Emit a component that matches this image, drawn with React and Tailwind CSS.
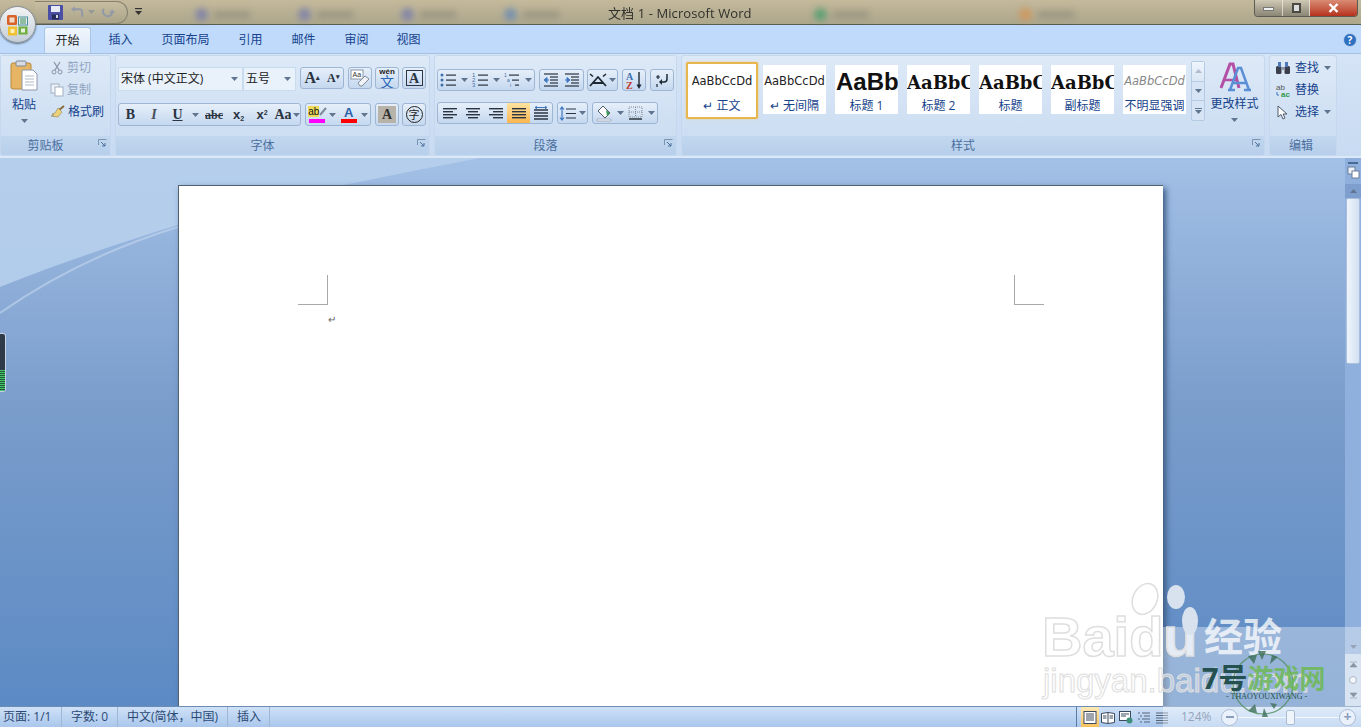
import React from 'react';

const font = { fontFamily: '"Open Sans","Noto Sans CJK SC",sans-serif' };

const Caret = ({ className = '' }) => (
  <svg width="7" height="4" viewBox="0 0 7 4" className={`shrink-0 ${className}`}><path d="M0 0h7L3.5 4z" fill="#5f7590" /></svg>
);

const Launcher = () => (
  <svg width="9" height="9" viewBox="0 0 9 9" className="shrink-0">
    <path d="M.5 6V.5H8.500" fill="none" stroke="#7d93ae" />
    <path d="M3 3l4 4M7 4v3H4" fill="none" stroke="#4d6f9c" />
  </svg>
);

const Group = ({ width, label, launcher, children }) => (
  <div className={`${width} h-[101px] shrink-0 flex flex-col rounded-[3px] border border-[#c5d8ee] bg-gradient-to-b from-[#dde9f7] to-[#c8dbf1] overflow-hidden`}>
    <div className="flex-1 min-h-0">{children}</div>
    <div className={`h-[19px] relative flex items-center justify-center bg-gradient-to-b from-[#c2d7ef] to-[#b7cfeb] text-[12px] text-[#4b6f9f] ${launcher ? 'pr-[20px]' : 'pr-[4px]'}`}>
      {label}
      {launcher && <span className="absolute right-[3px] top-[3px] flex"><Launcher /></span>}
    </div>
  </div>
);

const Seg = ({ width, height = 'h-[23px]', children }) => (
  <div className={`${width} ${height} shrink-0 flex items-center justify-around rounded-[3px] border border-[#9db6d3] bg-gradient-to-b from-[#e6effa] to-[#c5d8ef] overflow-hidden`}>{children}</div>
);

const Slot = ({ width, children }) => (
  <span className={`${width} shrink-0 flex items-center justify-center`}>{children}</span>
);

const Lines = ({ rows = 4, w = 14, align = 'left' }) => {
  const widths = rows === 4 ? [14, 10, 14, 10] : [14, 14, 14, 14];
  return (
    <svg width={w} height="13" viewBox="0 0 14 13">
      {widths.map((l, i) => {
        const x = align === 'left' ? 0 : align === 'right' ? 14 - l : (14 - l) / 2;
        return <rect key={i} x={x} y={1 + i * 3} width={l} height="1.4" fill="#2b3440" />;
      })}
    </svg>
  );
};

const ListIcon = ({ kind }) => (
  <svg width="17" height="15" viewBox="0 0 17 15">
    {[2, 7, 12].map((y, i) => (
      <g key={y}>
        {kind === 'bullet' && <circle cx="2" cy={y} r="1.5" fill="#3f6fa8" />}
        {kind === 'number' && <text x="0" y={y + 2} fontSize="6" fill="#3f6fa8" fontFamily="Liberation Sans">{i + 1}</text>}
        {kind === 'multi' && <text x={i * 3} y={y + 2} fontSize="5" fill="#3f6fa8" fontFamily="Liberation Sans">{['1', 'a', 'i'][i]}</text>}
        <rect x={kind === 'multi' ? 5 + i * 3 : 6} y={y - 0.5} width={kind === 'multi' ? 10 - i * 3 : 10} height="1.2" fill="#2b3440" />
      </g>
    ))}
  </svg>
);

const Indent = ({ flip }) => (
  <svg width="16" height="14" viewBox="0 0 16 14">
    {[1, 4, 7, 10, 13].map(y => <rect key={y} x={y === 1 || y === 13 ? 1 : 7} y={y - 0.6} width={y === 1 || y === 13 ? 14 : 8} height="1.2" fill="#2b3440" />)}
    <path d={flip ? 'M1 7h3.5M3 4.5L6 7 3 9.5z' : 'M6 7H2.5M4 4.5L1 7l3 2.5z'} fill="#3f78c0" stroke="#3f78c0" />
  </svg>
);

const Style = ({ selected, preview, label, previewClass }) => (
  <div className={selected
    ? 'w-[72px] h-[57px] shrink-0 mr-[-4px] border-2 border-[#e8b64f] rounded-[2px] bg-white flex flex-col items-center shadow-[0_0_2px_#f5c870]'
    : 'w-[63px] h-[49px] mt-[3px] shrink-0 bg-white flex flex-col items-center overflow-hidden'}>
    <div className={`h-[33px] w-full flex items-center justify-center overflow-hidden whitespace-nowrap ${selected ? 'pt-[2px]' : 'pt-[1px]'} ${previewClass}`}>{preview}</div>
    <div className={`text-[12px] leading-[16px] text-[#15428b] whitespace-nowrap ${selected ? 'mt-[1px]' : ''}`}>{label}</div>
  </div>
);

const EditRow = ({ icon, label, caret }) => (
  <div className="h-[22px] flex items-center gap-[3px] text-[12px] text-[#15428b]">
    <span className="w-[19px] flex justify-center">{icon}</span>
    {label}
    {caret && <Caret className="ml-[2px]" />}
  </div>
);

const Blob = ({ color, width }) => (
  <div className="flex items-center gap-[6px] shrink-0" style={{ width }}>
    <div className="w-[13px] h-[13px] rounded-full blur-[3px]" style={{ background: color }} />
    <div className="w-[36px] h-[7px] bg-[#6f6e66] opacity-50 blur-[3px]" />
  </div>
);

const ViewIcon = ({ kind }) => (
  <svg width="14" height="13" viewBox="0 0 14 13">
    {kind === 'print' && <><rect x="1" y=".5" width="12" height="12" fill="#fff" stroke="#3d4a5c" /><path d="M3 3h8M3 5h8M3 7h8M3 9h8" stroke="#3d4a5c" /></>}
    {kind === 'read' && <><path d="M.5 2.500L7 1.500l6.500 1v9L7 12.500l-6.500-1zM7 1.500v11" fill="#fff" stroke="#3d4a5c" /><path d="M2 5h3.500M2 7h3.500M8.500 5H12M8.500 7H12" stroke="#3d4a5c" /></>}
    {kind === 'web' && <><rect x=".5" y=".5" width="11" height="9" fill="#fff" stroke="#3d4a5c" /><path d="M2 3h8M2 5h5" stroke="#3d4a5c" /><circle cx="10.500" cy="9.500" r="3" fill="#3f8f7a" /></>}
    {kind === 'outline' && <path d="M1 2h2M5 2h8M3 5h2M7 5h6M1 8h2M5 8h8M3 11h2M7 11h6" stroke="#55657a" strokeWidth="1.200" />}
    {kind === 'draft' && <path d="M1 2h12M1 4.500h12M1 7h12M1 9.500h12M1 12h12" stroke="#55657a" strokeWidth="1.200" />}
  </svg>
);

export default function App() {
  return (
    <div style={font} className="relative w-[1361px] h-[727px] overflow-hidden flex flex-col bg-[#7fa3d0]">
      {/* title bar */}
      <div className="h-[25px] shrink-0 relative flex items-center border-b border-[#5c5b4f] bg-gradient-to-b from-[#c4b99b] to-[#aca68c]">
        <div className="absolute left-[195px] top-[8px] flex opacity-70">
          <Blob color="#6f76b0" width="103px" />
          <Blob color="#6f76b0" width="103px" />
          <Blob color="#6f76b0" width="103px" />
          <Blob color="#5f86b8" width="310px" />
          <Blob color="#3a9a68" width="205px" />
          <Blob color="#d9904d" width="160px" />
        </div>
        <div className="ml-[35px] relative w-[93px] h-[23px] rounded-r-[14px] border border-l-0 border-[#85826f] bg-gradient-to-b from-[#c9c0a5]/70 to-[#aaa388]/70 flex items-center pl-[13px]">
          <svg width="15" height="15" viewBox="0 0 15 15"><rect width="15" height="15" rx="1" fill="#4a4fa6" /><rect x="3" y="1" width="9" height="6" fill="#e8ebf5" /><rect x="4" y="9.500" width="7" height="5" fill="#272a55" /><rect x="8" y="10" width="2" height="3" fill="#d5d8e8" /></svg>
          <svg width="14" height="13" viewBox="0 0 15 13" className="ml-[7px] opacity-90"><path d="M13 11V6a3 3 0 0 0-3-3H3" fill="none" stroke="#8f97a8" strokeWidth="2.200" /><path d="M5 0L1 3l4 3z" fill="#8f97a8" /></svg>
          <Caret className="ml-[4px] opacity-40" />
          <svg width="14" height="13" viewBox="0 0 15 13" className="ml-[6px] opacity-90"><path d="M3 2.500A5 5 0 1 0 12 6" fill="none" stroke="#8f97a8" strokeWidth="2.200" /><path d="M9 7l3-4 3 4z" fill="#8f97a8" /></svg>
        </div>
        <svg width="7" height="8" viewBox="0 0 7 8" className="ml-[7px]"><rect width="7" height="1.200" fill="#333" /><path d="M0 3h7L3.500 7z" fill="#333" /></svg>
        <div className="absolute left-[608px] top-[5px] text-[13px] leading-[16px] tracking-[0.1px] text-[#30302c] whitespace-nowrap">文档 1 - Microsoft Word</div>
        <div className="ml-auto mr-[3px] mb-[8px] h-[17px] flex rounded-b-[4px] border border-t-0 border-[#5d5c54] overflow-hidden">
          <div className="w-[28px] flex items-center justify-center bg-gradient-to-b from-[#cfc9b5] to-[#8a8675] border-r border-[#f0ede2]/70"><div className="w-[11px] h-[4px] mt-[3px] bg-[#eee] border border-[#777]" /></div>
          <div className="w-[27px] flex items-center justify-center bg-gradient-to-b from-[#cfc9b5] to-[#8a8675] border-r border-[#f0ede2]/70"><div className="w-[9px] h-[10px] border-2 border-[#4a4a44] bg-[#ddd]" /></div>
          <div className="w-[47px] flex items-center justify-center bg-gradient-to-b from-[#d98b74] to-[#b5301c]">
            <svg width="11" height="10" viewBox="0 0 11 10"><path d="M1.500 1l8 8M9.500 1l-8 8" stroke="#fff" strokeWidth="2.400" /></svg>
          </div>
        </div>
      </div>

      {/* office button */}
      <div className="absolute left-[-1px] top-[6px] w-[37px] h-[37px] rounded-full border border-[#8a9099] bg-gradient-to-b from-[#f2f3f3] to-[#c4ced8] shadow-[0_1px_2px_#5a6b7f] flex items-center justify-center z-10">
        <svg width="24" height="24" viewBox="0 0 24 24">
          <rect x="1" y="2" width="10" height="10" rx="1.500" fill="#d9622b" />
          <rect x="3.500" y="4.500" width="5" height="5" fill="#f3d9c8" />
          <rect x="12.500" y="4" width="9" height="8" fill="#e3edf0" stroke="#4b8f9c" />
          <path d="M14 6h6M14 8h6M14 10h6" stroke="#3c8a57" strokeWidth="1" />
          <rect x="2" y="13.500" width="9" height="9" fill="#f0c033" />
          <rect x="4.500" y="16" width="4" height="4" fill="#fbeeb6" />
          <rect x="12.500" y="13.500" width="9" height="8" fill="#6fae3f" />
          <rect x="15" y="15.500" width="4" height="4" fill="#e5f1d8" />
        </svg>
      </div>

      {/* tabs */}
      <div className="h-[28px] shrink-0 flex items-end pl-[44px] bg-[#bfdafb] text-[12px] text-[#15428b]">
        <div className="w-[47px] h-[26px] flex items-center justify-center rounded-t-[3px] border border-b-0 border-[#a9c4e4] bg-gradient-to-b from-[#f0f6fd] to-[#dce9f8] text-[#222]">开始</div>
        <div className="h-[26px] flex items-center">
          <span className="w-[59px] text-center">插入</span>
          <span className="w-[71px] text-center">页面布局</span>
          <span className="w-[59px] text-center">引用</span>
          <span className="w-[47px] text-center">邮件</span>
          <span className="w-[59px] text-center">审阅</span>
          <span className="w-[45px] text-center">视图</span>
        </div>
        <div className="ml-auto mr-[4px] mb-[6px] w-[14px] h-[14px] rounded-full bg-[#2f6fc0] border border-[#bcd4ee] text-white text-[10px] leading-[12px] font-bold text-center">?</div>
      </div>

      {/* ribbon */}
      <div className="h-[105px] shrink-0 flex items-start gap-[4px] pt-[1px] pr-[3px] border-t border-[#a5c1e2] border-b-2 border-b-[#dbe8f7] bg-gradient-to-b from-[#d5e4f6] to-[#c8dbf2] text-[#15428b]">
        <Group width="w-[111px]" label="剪贴板" launcher>
          <div className="flex h-full">
            <div className="w-[49px] pr-[3px] flex flex-col items-center pt-[4px]">
              <svg width="28" height="31" viewBox="0 0 28 31"><rect x="1" y="3" width="20" height="26" rx="2" fill="#e6b564" stroke="#b98a3c" /><rect x="6" y="1" width="10" height="5" rx="1" fill="#d7dce2" stroke="#7e8894" /><path d="M12 10h11l4 4v16H12z" fill="#fff" stroke="#8e98a8" /><path d="M15 16h9M15 19h9M15 22h9M15 25h9" stroke="#b0b9c6" /></svg>
              <span className="text-[12px] leading-[16px] mt-[6px] text-[#15428b]">粘贴</span>
              <Caret className="mt-[6px]" />
            </div>
            <div className="pt-[1px] flex flex-col">
              <div className="h-[22px] flex items-center gap-[3px] text-[12px] text-[#8ea4bf]">
                <svg width="14" height="14" viewBox="0 0 14 14"><path d="M4 1l5 8M10 1L5 9" stroke="#8b97a8" strokeWidth="1.300" /><circle cx="4" cy="11" r="2" fill="none" stroke="#8b97a8" /><circle cx="10" cy="11" r="2" fill="none" stroke="#8b97a8" /></svg>
                剪切
              </div>
              <div className="h-[22px] flex items-center gap-[3px] text-[12px] text-[#8ea4bf]">
                <svg width="14" height="14" viewBox="0 0 14 14"><rect x="1" y="1" width="8" height="9" fill="#eef3f9" stroke="#a3afbf" /><rect x="5" y="4" width="8" height="9" fill="#fff" stroke="#a3afbf" /></svg>
                复制
              </div>
              <div className="h-[22px] flex items-center gap-[3px] text-[12px] text-[#15428b]">
                <svg width="15" height="14" viewBox="0 0 15 14"><path d="M9 5l5-4" stroke="#8a6b3c" strokeWidth="2" /><path d="M8 3l4 4-4 5-7-1 3-1-2-1 3-1z" fill="#eed27a" stroke="#8f8250" strokeWidth=".6" /></svg>
                格式刷
              </div>
            </div>
          </div>
        </Group>

        <Group width="w-[315px]" label="字体" launcher>
          <div className="pl-[2px] pt-[11px] flex flex-col gap-[12px]">
            <div className="flex items-start">
              <div className="w-[125px] h-[24px] shrink-0 flex items-center justify-between pl-[2px] pr-[4px] bg-[#e9f1fb] border border-[#c9dbef] text-[12px] text-[#222]">宋体 (中文正文)<Caret /></div>
              <div className="w-[53px] h-[24px] shrink-0 flex items-center justify-between px-[2px] pr-[4px] bg-[#e9f1fb] border border-[#c9dbef] text-[12px] text-[#222]">五号<Caret /></div>
              <div className="ml-[4px]"><Seg width="w-[44px]" height="h-[22px]"><span className="font-['Liberation_Serif'] font-bold text-[16px] leading-[16px] text-[#2b3440]">A<sup className="text-[7px]">▴</sup></span><span className="font-['Liberation_Serif'] font-bold text-[12px] leading-[16px] text-[#2b3440]">A<sup className="text-[7px]">▾</sup></span></Seg></div>
              <div className="ml-[4px]"><Seg width="w-[24px]" height="h-[22px]">
                <svg width="20" height="18" viewBox="0 0 20 18"><rect x="1" y="1" width="12" height="9" fill="#fff" stroke="#8795a8" /><text x="2.500" y="8" fontSize="7" fill="#333" fontFamily="Liberation Sans">Aa</text><path d="M8 14l7-7 4 3-7 7h-2z" fill="#f0f2f5" stroke="#7f8a99" /></svg>
              </Seg></div>
              <div className="ml-[3px]"><Seg width="w-[24px]" height="h-[22px]">
                <div className="flex flex-col items-center leading-none"><span className="font-['Liberation_Sans'] font-bold text-[8px] leading-[7px] text-[#222]">wén</span><span className="text-[14px] leading-[13px] text-[#2a68b8]">文</span></div>
              </Seg></div>
              <div className="ml-[3px]"><Seg width="w-[24px]" height="h-[22px]"><span className="w-[17px] h-[16px] flex items-center justify-center border border-[#2b3440] font-['Liberation_Serif'] font-bold text-[14px] text-[#2b3440]">A</span></Seg></div>
            </div>
            <div className="flex items-center font-['Liberation_Serif'] text-[#2b3440]">
              <Seg width="w-[183px]">
                <Slot width="w-[23px]"><span className="font-bold text-[14px]">B</span></Slot>
                <Slot width="w-[24px]"><span className="italic text-[14px] font-bold text-[#4a4f58]">I</span></Slot>
                <Slot width="w-[23px]"><span className="font-bold text-[14px] underline">U</span></Slot>
                <Slot width="w-[12px]"><Caret /></Slot>
                <Slot width="w-[26px]"><span className="font-bold text-[12px] line-through">abc</span></Slot>
                <Slot width="w-[23px]"><span className="font-['Liberation_Sans'] font-bold text-[13px]">x<sub className="text-[7px]">2</sub></span></Slot>
                <Slot width="w-[24px]"><span className="font-['Liberation_Sans'] font-bold text-[13px]">x<sup className="text-[7px]">2</sup></span></Slot>
                <Slot width="w-[18px]"><span className="font-bold text-[14px]">Aa</span></Slot>
                <Slot width="w-[8px]"><Caret /></Slot>
              </Seg>
              <div className="ml-[4px]"><Seg width="w-[66px]">
                <span className="relative flex flex-col items-center leading-none">
                  <span className="w-[17px] h-[11px] font-['Liberation_Sans'] text-[10px] leading-[10px] text-[#111]">
                    <span className="bg-[#eedb5a]">ab</span>
                  </span>
                  <svg width="9" height="9" viewBox="0 0 9 9" className="absolute right-[-3px] top-0"><path d="M1 8l6-7" stroke="#7f8a99" strokeWidth="2" /></svg>
                  <span className="w-[16px] h-[4px] bg-[#ff00ff] mt-[1px]" />
                </span>
                <Caret />
                <span className="flex flex-col items-center leading-none">
                  <span className="font-['Liberation_Sans'] font-bold text-[13px] leading-[12px] text-[#2a5fa8]">A</span>
                  <span className="w-[16px] h-[4px] bg-[#ff0000]" />
                </span>
                <Caret />
              </Seg></div>
              <div className="ml-[4px]"><Seg width="w-[24px]"><span className="w-[18px] h-[17px] flex items-center justify-center bg-[#b8b3a8] font-bold text-[14px] text-[#333]">A</span></Seg></div>
              <div className="ml-[3px]"><Seg width="w-[24px]"><span className="w-[17px] h-[17px] rounded-full border border-[#222] flex items-center justify-center text-[11px] text-[#222] font-['Noto_Sans_CJK_SC']">字</span></Seg></div>
            </div>
          </div>
        </Group>

        <Group width="w-[243px]" label="段落" launcher>
          <div className="pl-[2px] pt-[13px] flex flex-col gap-[11px]">
            <div className="flex items-center">
              <Seg width="w-[98px]" height="h-[22px]"><ListIcon kind="bullet" /><Caret /><ListIcon kind="number" /><Caret /><ListIcon kind="multi" /><Caret /></Seg>
              <div className="ml-[4px]"><Seg width="w-[45px]" height="h-[22px]"><Indent /><Indent flip /></Seg></div>
              <div className="ml-[3px]"><Seg width="w-[31px]" height="h-[22px]">
                <svg width="18" height="14" viewBox="0 0 18 14"><path d="M1 13L9 4l8 9M4 10h10" fill="none" stroke="#1d2833" strokeWidth="1.800" /><path d="M1 1l3 2.500M17 1l-3 2.500" stroke="#1d2833" strokeWidth="1.600" /></svg>
                <Caret />
              </Seg></div>
              <div className="ml-[4px]"><Seg width="w-[24px]" height="h-[22px]">
                <svg width="19" height="19" viewBox="0 0 19 19"><text x="1" y="9" fontSize="10" fontWeight="bold" fill="#3f6fb0" fontFamily="Liberation Serif">A</text><text x="1" y="18" fontSize="10" fontWeight="bold" fill="#c0392b" fontFamily="Liberation Serif">Z</text><path d="M14 1v14" stroke="#1d2833" strokeWidth="1.400" /><path d="M11.500 13.500L14 18l2.500-4.500z" fill="#1d2833" /></svg>
              </Seg></div>
              <div className="ml-[4px]"><Seg width="w-[24px]" height="h-[22px]">
                <svg width="15" height="16" viewBox="0 0 15 16"><path d="M12 2v5c0 2-1 3-3 3H6" fill="none" stroke="#1d2833" strokeWidth="1.500" /><path d="M7 7l-3 3 3 3z" fill="#1d2833" /><path d="M1 5h4M3 3v4M2 12v3" stroke="#1d2833" strokeWidth="1.200" /></svg>
              </Seg></div>
            </div>
            <div className="flex items-center gap-[4px]">
              <Seg width="w-[116px]" height="h-[22px]">
                <Slot width="w-[23px]"><Lines align="left" /></Slot>
                <Slot width="w-[23px]"><Lines align="center" /></Slot>
                <Slot width="w-[23px]"><Lines align="right" /></Slot>
                <span className="w-[23px] h-[21px] flex items-center justify-center bg-gradient-to-b from-[#fde3a0] to-[#f9b44a]"><Lines rows={5} /></span>
                <Slot width="w-[22px]"><svg width="16" height="15" viewBox="0 0 16 15"><path d="M1 4h14M1 7h14M1 10h14M1 13h14" stroke="#2b3440" strokeWidth="1.300" /><path d="M2 1.500h12M2 1.500l2-1.500M2 1.500L4 3M14 1.500L12 0M14 1.500L12 3" stroke="#3f78c0" strokeWidth="1" fill="none" /></svg></Slot>
              </Seg>
              <Seg width="w-[31px]" height="h-[22px]">
                <svg width="17" height="15" viewBox="0 0 17 15"><path d="M3 1v13M1 3.500L3 1l2 2.500M1 11.500L3 14l2-2.500" fill="none" stroke="#3f78c0" strokeWidth="1.200" /><path d="M7 3h10M7 7.500h10M7 12h10" stroke="#2b3440" strokeWidth="1.200" /></svg>
                <Caret />
              </Seg>
              <Seg width="w-[66px]" height="h-[22px]">
                <svg width="18" height="17" viewBox="0 0 18 17"><path d="M8 1l7 7-5 5-7-7z" fill="#fff" stroke="#4d5a6a" /><path d="M2 14h14v2H2z" fill="#eef3f9" stroke="#8a98a8" strokeWidth=".6" /><path d="M11 5l4 3-3 3z" fill="#3b9a57" /></svg>
                <Caret />
                <svg width="16" height="15" viewBox="0 0 16 15"><rect x="1" y="1" width="13" height="10" fill="none" stroke="#7f8a99" strokeDasharray="1 1" /><path d="M7.500 1v10M1 6h13" stroke="#7f8a99" strokeDasharray="1 1" /><path d="M1 13h13" stroke="#2b3440" strokeWidth="1.500" /></svg>
                <Caret />
              </Seg>
            </div>
          </div>
        </Group>

        <Group width="w-[584px]" label="样式" launcher>
          <div className="flex pl-[4px] h-full">
            <div className="flex items-start gap-[9px] pt-[6px]">
              <Style selected preview="AaBbCcDd" label={<>↵ 正文</>} previewClass="font-['DejaVu_Sans'] text-[11.500px] text-[#222]" />
              <Style preview="AaBbCcDd" label={<>↵ 无间隔</>} previewClass="font-['DejaVu_Sans'] text-[11.500px] text-[#222]" />
              <Style preview="AaBb" label="标题 1" previewClass="font-['Liberation_Sans'] font-bold text-[24px] text-[#111] !justify-start pl-[1px]" />
              <Style preview="AaBbC" label="标题 2" previewClass="font-['DejaVu_Serif'] font-bold text-[18px] text-[#111] !justify-start" />
              <Style preview="AaBbC" label="标题" previewClass="font-['DejaVu_Serif'] font-bold text-[18px] text-[#111] !justify-start" />
              <Style preview="AaBbC" label="副标题" previewClass="font-['DejaVu_Serif'] font-bold text-[18px] text-[#111] !justify-start" />
              <Style preview="AaBbCcDd" label="不明显强调" previewClass="font-['DejaVu_Sans'] italic text-[11.500px] text-[#888]" />
            </div>
            <div className="ml-[5px] mt-[5px] w-[14px] h-[60px] flex flex-col border border-[#b5cbe4] rounded-[2px] bg-[#d6e4f5]">
              <div className="flex-1 flex items-center justify-center border-b border-[#b5cbe4] bg-gradient-to-b from-[#eef4fb] to-[#dbe7f6]"><Caret className="rotate-180 opacity-40" /></div>
              <div className="flex-1 flex items-center justify-center border-b border-[#b5cbe4]"><Caret /></div>
              <div className="flex-1 flex flex-col items-center justify-center gap-[1px]"><span className="w-[7px] h-px bg-[#5f7590]" /><Caret /></div>
            </div>
            <div className="w-[59px] flex flex-col items-center pt-[6px] text-[12px] text-[#15428b]">
              <svg width="32" height="30" viewBox="0 0 32 30"><path d="M2 26L11 2h3l6 24" fill="none" stroke="#b44fa6" strokeWidth="3" /><path d="M5 18h12" stroke="#b44fa6" strokeWidth="2.500" /><path d="M11 28L19 6h3l8 22M14 21h13M9 28h7M25 28h7" fill="none" stroke="#5a8fd6" strokeWidth="2.500" /></svg>
              <span className="leading-[16px] mt-[4px] whitespace-nowrap">更改样式</span>
              <Caret className="mt-[6px]" />
            </div>
          </div>
        </Group>

        <Group width="w-[68px]" label="编辑">
          <div className="pl-[3px] pt-[1px]">
            <EditRow caret label="查找" icon={<svg width="16" height="14" viewBox="0 0 16 14"><rect x="1" y="5" width="5.500" height="8" rx="1.500" fill="#3a3f4b" /><rect x="9.500" y="5" width="5.500" height="8" rx="1.500" fill="#3a3f4b" /><rect x="3" y="1" width="3" height="5" fill="#4e78b5" /><rect x="10" y="1" width="3" height="5" fill="#4e78b5" /><rect x="6" y="6" width="4" height="3" fill="#8d96a6" /></svg>} />
            <EditRow label="替换" icon={<svg width="16" height="15" viewBox="0 0 16 15"><text x="1" y="7" fontSize="8" fill="#555" fontFamily="Liberation Sans">ab</text><text x="6" y="14" fontSize="8" fontWeight="bold" fill="#2f9a4e" fontFamily="Liberation Sans">ac</text><path d="M2 9v3h2" fill="none" stroke="#3f78c0" /></svg>} />
            <EditRow caret label="选择" icon={<svg width="11" height="15" viewBox="0 0 11 15"><path d="M1 1v11l3-2.500L6 14l2-1-2-4h4z" fill="#fff" stroke="#4d5a6a" /></svg>} />
          </div>
        </Group>
      </div>

      {/* document area */}
      <div className="flex-1 min-h-0 flex bg-gradient-to-b from-[#a3c0e6] via-[#7a9dcb] via-45% to-[#5c8ac4]">
        <div className="relative flex-1 min-w-0 overflow-hidden pl-[178px] pt-[27px]">
          <svg className="absolute left-0 top-0" width="1345" height="170" viewBox="0 0 1345 170">
            <path d="M0 129C60 105 120 85 178 67S340 27 480 0H0z" fill="#b6cfec" fillOpacity=".9" />
            <path d="M0 155C50 120 110 90 178 69" fill="none" stroke="#c4d7ef" strokeOpacity=".6" strokeWidth="2" />
          </svg>
          <div className="absolute left-0 top-[175px] w-[6px] h-[59px] rounded-r-[3px] border border-l-0 border-[#c5d3e3] bg-[#2f3a48] flex flex-col justify-end overflow-hidden">
            <div className="h-[21px] bg-[repeating-linear-gradient(180deg,#45c46a_0,#45c46a_1px,#1f5a38_1px,#1f5a38_2px)]" />
          </div>
          <div className="relative w-[985px] h-[540px] bg-white border-t border-l border-[#52626f] shadow-[3px_3px_6px_#3c5a80] pl-[119px] pr-[119px] pt-[89px]">
            <div className="flex justify-between">
              <div className="w-[30px] h-[30px] border-r border-b border-[#a8a8a8]" />
              <div className="w-[30px] h-[30px] border-l border-b border-[#a8a8a8]" />
            </div>
            <div className="pl-[30px] mt-[8px] text-[10px] leading-[12px] text-[#666]">↵</div>
          </div>
        </div>
        <div className="w-[16px] shrink-0 flex flex-col items-center bg-[#8fb0dc]">
          <div className="w-[10px] h-[2px] mt-[4px] bg-[#4a6a96]" />
          <svg width="13" height="13" viewBox="0 0 13 13" className="mt-[2px]"><rect x="1" y="1" width="7" height="7" fill="#eef3f9" stroke="#6b7f99" /><rect x="5" y="5" width="7" height="7" fill="#fff" stroke="#6b7f99" /></svg>
          <div className="w-full h-[14px] mt-[5px] flex items-center justify-center bg-[#7e9fcd]"><Caret className="rotate-180" /></div>
          <div className="w-[14px] h-[166px] rounded-[2px] border border-[#a9bfdc] bg-gradient-to-r from-[#eef4fb] to-[#d3e1f3]" />
          <div className="flex-1" />
          <div className="w-full h-[14px] flex items-center justify-center"><Caret /></div>
          <div className="w-full h-[52px] flex flex-col items-center justify-around bg-[#c5d6ec] py-[3px]">
            <svg width="7" height="8" viewBox="0 0 7 8"><path d="M0 1h7M3.500 2L0 6h7z" stroke="#4a5a70" fill="#4a5a70" strokeWidth=".6" /></svg>
            <span className="w-[8px] h-[8px] rounded-full border border-[#7d8da3] bg-[#eef3f9]" />
            <svg width="7" height="8" viewBox="0 0 7 8"><path d="M0 7h7M3.500 6L0 2h7z" stroke="#4a5a70" fill="#4a5a70" strokeWidth=".6" /></svg>
          </div>
        </div>
      </div>

      {/* status bar */}
      <div className="h-[21px] shrink-0 flex items-center border-t border-[#6c8cb3] bg-gradient-to-b from-[#cfe1f7] to-[#a9c7ec] text-[12px] text-[#2c4a75]">
        <div className="w-[62px] h-full flex items-center pl-[3px] border-r border-[#9db6d3]">页面: 1/1</div>
        <div className="w-[56px] h-full flex items-center pl-[9px] border-r border-[#9db6d3]">字数: 0</div>
        <div className="w-[110px] h-full flex items-center pl-[9px] border-r border-[#9db6d3]">中文(简体，中国)</div>
        <div className="w-[42px] h-full flex items-center pl-[9px] border-r border-[#9db6d3]">插入</div>
        <div className="ml-auto h-full flex items-center">
          <div className="w-[96px] h-full flex items-center pl-[4px] border-l border-[#5b7ba5]">
            <span className="w-[18px] h-full flex items-center justify-center bg-gradient-to-b from-[#fde9b5] to-[#f6c25e]"><ViewIcon kind="print" /></span>
            <span className="w-[18px] flex justify-center"><ViewIcon kind="read" /></span>
            <span className="w-[18px] flex justify-center"><ViewIcon kind="web" /></span>
            <span className="w-[18px] flex justify-center"><ViewIcon kind="outline" /></span>
            <span className="w-[18px] flex justify-center"><ViewIcon kind="draft" /></span>
          </div>
          <span className="w-[49px] pl-[9px] text-[#5a7396]">124%</span>
          <span className="w-[17px] h-[17px] rounded-full border border-[#7d98bb] bg-[#dfeafa] flex items-center justify-center"><span className="w-[8px] h-[2px] bg-[#4a6a96]" /></span>
          <span className="relative w-[101px] h-px bg-[#eef4fb] flex items-center justify-center">
            <span className="absolute left-[48px] w-[9px] h-[15px] rounded-[2px] border border-[#7d98bb] bg-[#e8f0fb]" />
          </span>
          <span className="w-[17px] h-[17px] mr-[5px] rounded-full border border-[#7d98bb] bg-[#dfeafa] flex items-center justify-center text-[14px] leading-none font-bold text-[#4a6a96]">+</span>
        </div>
      </div>

      {/* watermarks */}
      <div className="absolute left-[1163px] top-[627px] w-[198px] h-[100px] bg-white/35 pointer-events-none" />
      <div className="absolute left-[1042px] top-[607px] pointer-events-none font-['Liberation_Sans'] text-[56px] leading-[60px] font-bold text-white/40 [-webkit-text-stroke:1.500px_#dedede] whitespace-nowrap">Baid<span className="text-white/75">u</span></div>
      <div className="absolute left-[1204px] top-[614px] pointer-events-none text-[39px] leading-[44px] font-bold text-white/75 whitespace-nowrap">经验</div>
      <div className="absolute left-[1043px] top-[663px] pointer-events-none font-['Liberation_Sans'] text-[33px] leading-[36px] text-white/40 [-webkit-text-stroke:1px_#dedede] whitespace-nowrap">jingyan.baidu.com</div>
      <svg className="absolute left-[1120px] top-[580px] pointer-events-none" width="82" height="60" viewBox="0 0 82 60">
        <ellipse cx="25" cy="19" rx="12" ry="16" transform="rotate(25 25 19)" fill="#fff" fillOpacity=".35" stroke="#dedede" strokeWidth="1.500" />
        <ellipse cx="56" cy="17" rx="9" ry="12" fill="#d8e2ef" />
        <ellipse cx="70" cy="41" rx="8" ry="14" fill="#d8e2ef" />
      </svg>
      <svg className="absolute left-[1230px] top-[647px] pointer-events-none" width="66" height="74" viewBox="0 0 66 74">
        <circle cx="33" cy="37" r="30" fill="none" stroke="#4b8a57" strokeWidth="1.200" strokeOpacity=".75" />
        <path d="M18 9l6 8 3-9zM28 4l4 9 4-9zM42 8l-2 9 8-7zM18 64l7-7 2 9zM32 70l2-9 4 9zM44 62l-4-6 7 1z" fill="#3f6f58" fillOpacity=".8" />
      </svg>
      <div className="absolute left-[1202px] top-[661px] flex items-end pointer-events-none font-bold whitespace-nowrap">
        <span className="text-[29px] leading-[34px] text-[#24514f]">7号</span>
        <span className="text-[26px] leading-[34px] text-[#6fb85a]/90">游戏网</span>
      </div>
      <div className="absolute left-[1226px] top-[692px] pointer-events-none font-['Liberation_Serif'] text-[8px] leading-[10px] text-[#24514f] whitespace-nowrap">- THAOYOUXIWANG -</div>
    </div>
  );
}
